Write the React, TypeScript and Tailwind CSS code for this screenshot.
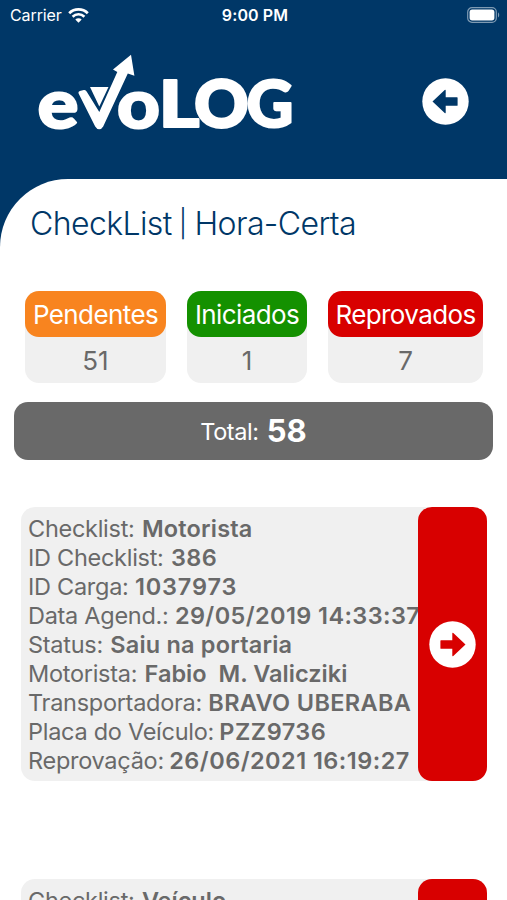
type Row = { label: string; value: string; track: string }

const counters = [
  { title: 'Pendentes', value: 51, width: 'w-[141px]', color: 'bg-[#f8841f]' },
  { title: 'Iniciados', value: 1, width: 'w-[120px]', color: 'bg-[#149100]' },
  { title: 'Reprovados', value: 7, width: 'w-[155px]', color: 'bg-[#d80000]' },
]

const checklists: Row[][] = [
  [
    { label: 'Checklist:', value: 'Motorista', track: 'ml-px tracking-[0.2px]' },
    { label: 'ID Checklist:', value: '386', track: 'ml-px tracking-[0.4px]' },
    { label: 'ID Carga:', value: '1037973', track: 'tracking-[0.85px]' },
    { label: 'Data Agend.:', value: '29/05/2019 14:33:37', track: 'tracking-[0.4px]' },
    { label: 'Status:', value: 'Saiu na portaria', track: 'ml-px tracking-[0.2px]' },
    { label: 'Motorista:', value: 'Fabio  M. Valicziki', track: 'ml-px tracking-[0.03px]' },
    { label: 'Transportadora:', value: 'BRAVO UBERABA', track: 'tracking-[0.35px]' },
    { label: 'Placa do Veículo:', value: 'PZZ9736', track: '-ml-px tracking-[0.5px]' },
    { label: 'Reprovação:', value: '26/06/2021 16:19:27', track: '-ml-px tracking-[0.46px]' },
  ],
  [{ label: 'Checklist:', value: 'Veículo', track: 'ml-px tracking-normal' }],
]

function StatusBar() {
  return (
    <div className="flex h-[30px] items-center justify-between pl-[10px] pr-[7px] text-white">
      <div className="flex w-[120px] items-center gap-[6px]">
        <span className="text-[16px] tracking-[-0.1px]">Carrier</span>
        <svg width="21" height="15" viewBox="0 0 21 15" fill="none" stroke="white">
          <path d="M1.2 5.2a13.4 13.4 0 0 1 18.6 0" strokeWidth="2.8" />
          <path d="M4.6 8.7a8.5 8.5 0 0 1 11.8 0" strokeWidth="2.6" />
          <path d="M10.5 14.8 7.3 11.6a4.6 4.6 0 0 1 6.4 0z" fill="white" stroke="none" />
        </svg>
      </div>
      <span className="text-[16px] font-semibold tracking-[0.1px]">9:00 PM</span>
      <div className="flex w-[120px] justify-end">
        <svg width="33" height="16" viewBox="0 0 33 16" fill="none">
          <rect x="0.7" y="0.7" width="28.6" height="14.6" rx="4.3" stroke="#7f9bb3" strokeWidth="1.2" />
          <rect x="2.6" y="2.6" width="24.8" height="10.8" rx="2.6" fill="white" />
          <path d="M31 5.6c1.6.6 1.6 4.2 0 4.8z" fill="#7f9bb3" />
        </svg>
      </div>
    </div>
  )
}

function Logo() {
  return (
    <svg width="264" height="100" viewBox="36 50 264 100" className="overflow-visible" fill="white">
      <g
        fontFamily="Lato, sans-serif"
        fontWeight="900"
        stroke="white"
        strokeWidth="2"
        strokeLinejoin="round"
      >
        <text x="37.5" y="127.5" fontSize="69" textLength="41" lengthAdjust="spacingAndGlyphs">e</text>
        <text x="117" y="127.5" fontSize="69" textLength="43" lengthAdjust="spacingAndGlyphs">o</text>
        <text x="158.500" y="126.5" fontSize="65" textLength="41" lengthAdjust="spacingAndGlyphs">L</text>
        <text x="194.5" y="126.500" fontSize="65" textLength="54" lengthAdjust="spacingAndGlyphs" strokeWidth="3">O</text>
        <text x="246.5" y="126.5" fontSize="65" textLength="47" lengthAdjust="spacingAndGlyphs">G</text>
      </g>
      {/* check mark with the arrow head */}
      <path d="M78.6 93.5q-.8-2 1.2-2.5l4-.9q2-.4 3 1.600l12.500 20.300 18-40-4.300-2.500L131 54.700l3.400 21.100-6.600-2.400-24.600 53.100q-1.500 2.700-4 2.700t-4-2.700z" />
      <path d="M90 87h18.500l-9.200 19.500z" />
    </svg>
  )
}

function ArrowCircle({ className }: { className: string }) {
  return (
    <svg width="47" height="47" viewBox="0 0 47 47" className={className}>
      <circle cx="23.5" cy="23.5" r="23.2" fill="white" />
      <path
        d="M10.5 23.5 22.700 12q1-.6 1 .5V19.200H35q.6 0 .6.6v7.400q0 .6-.6.6H23.700V34.500q0 1.100-1 .5z"
        fill="currentColor"
      />
    </svg>
  )
}

function ChecklistCard({ rows }: { rows: Row[] }) {
  return (
    <div className="flex h-[274px] rounded-[14px] bg-[#f0f0f0]">
      <div className="w-[397px] shrink-0 whitespace-pre pl-[7px] pt-[7px] text-[23.5px] leading-[29px] text-[#696969]">
        {rows.map((row) => (
          <div key={row.label} className="tracking-[-0.28px]">
            {row.label} <span className={`font-semibold ${row.track}`}>{row.value}</span>
          </div>
        ))}
      </div>
      <button className="flex w-[69px] shrink-0 items-center justify-center rounded-[14px] bg-[#d80000]">
        <ArrowCircle className="rotate-180 text-[#d80000]" />
      </button>
    </div>
  )
}

export default function App() {
  return (
    <div className="h-[900px] w-[507px] overflow-hidden bg-[#003767] font-[Inter,sans-serif]">
      <StatusBar />
      <header className="flex h-[149px] items-start justify-between pl-[36px] pr-[38px] pt-[20px]">
        <Logo />
        <button className="mt-[28px]">
          <ArrowCircle className="text-[#003767]" />
        </button>
      </header>

      <main className="h-[721px] rounded-tl-[68px] bg-white">
        <h1 className="flex h-[112px] pl-[30px] pt-[25px] text-[32px] font-light leading-[40px] tracking-[-0.6px] text-[#003767]">
          CheckList
          <span className="ml-[7px] mr-[8px] text-[27px]">|</span>
          Hora-Certa
        </h1>

        <div className="flex justify-between pl-[25px] pr-[24px]">
          {counters.map((c) => (
            <div key={c.title} className={`${c.width} h-[92px] rounded-[14px] bg-[#f0f0f0] text-center text-[26px]`}>
              <div className={`${c.color} h-[46px] rounded-[14px] leading-[48px] tracking-[-0.6px] text-white`}>
                {c.title}
              </div>
              <div className="leading-[48px] text-[#696969]">{c.value}</div>
            </div>
          ))}
        </div>

        <div className="mx-[14px] mt-[19px] flex h-[58px] items-center justify-center gap-[8px] rounded-[14px] bg-[#696969] text-white">
          <span className="pt-px text-[23.5px] tracking-[-0.4px]">Total:</span>
          <span className="text-[31px] font-bold">58</span>
        </div>

        <div className="ml-[21px] mt-[47px] flex w-[466px] flex-col gap-[98px]">
          {checklists.map((rows, i) => (
            <ChecklistCard key={i} rows={rows} />
          ))}
        </div>
      </main>
    </div>
  )
}
